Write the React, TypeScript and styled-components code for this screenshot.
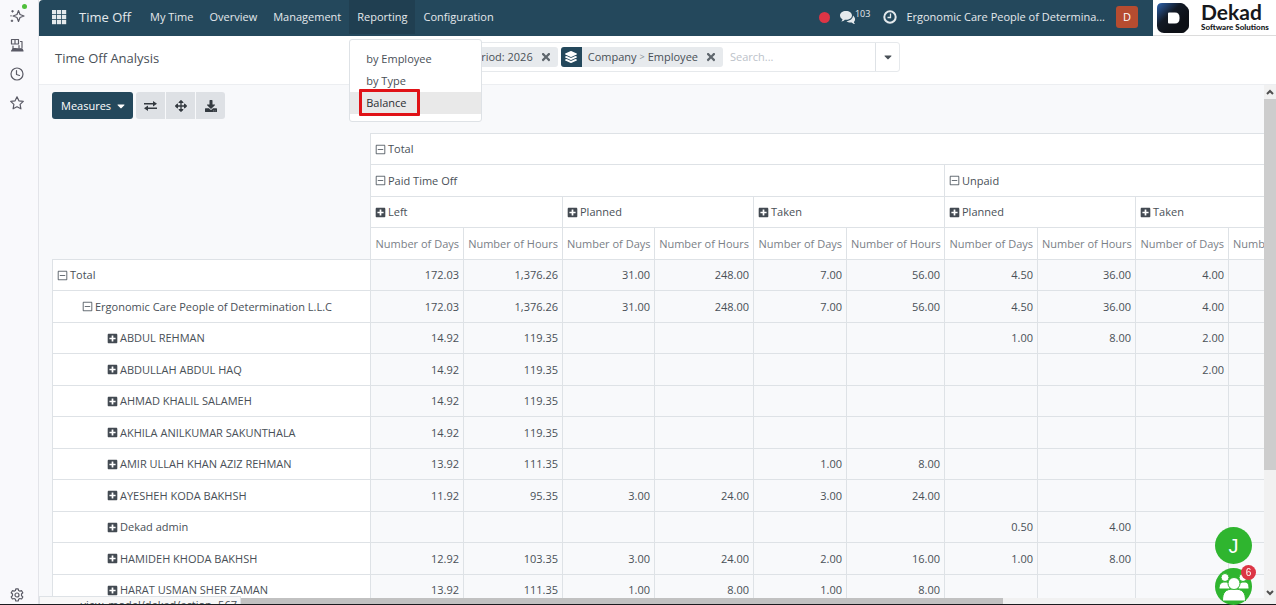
import React from "react";
import styled, { createGlobalStyle, css } from "styled-components";
import {
  FaPlusSquare,
  FaRegMinusSquare,
  FaCaretDown,
  FaDownload,
  FaArrowsAlt,
  FaLayerGroup,
  FaTimes,
} from "react-icons/fa";

const Global = createGlobalStyle`
  *, *::before, *::after { box-sizing: border-box; }
  body {
    margin: 0;
    overflow: hidden;
    background: #f8f9fb;
    color: #495057;
    font-family: "Open Sans", "Noto Sans", sans-serif;
    font-size: 11px;
    line-height: 18px;
  }
  button, input { font: inherit; color: inherit; }
  a { color: inherit; text-decoration: none; }
`;

const navy = "#24485c";
const line = "#dee2e6";

const Shell = styled.div`
  display: flex;
  height: 100vh;
  overflow: hidden;
  border-bottom: 1px solid #1b1b1f;
`;

const Rail = styled.aside`
  flex: none;
  width: 39px;
  display: flex;
  flex-direction: column;
  align-items: center;
  justify-content: space-between;
  padding: 8px 4px 1px 0;
  background: #f9f9fc;
  border-right: 1px solid #e3e4e9;
`;

const RailGroup = styled.div`
  display: flex;
  flex-direction: column;
  gap: 13px;
`;

const RailButton = styled.button`
  position: relative;
  display: flex;
  padding: 0;
  border: 0;
  background: none;
  color: #5b5b66;
`;

const Dot = styled.span`
  position: absolute;
  top: -4px;
  right: -2px;
  width: 5px;
  height: 5px;
  border-radius: 50%;
  background: #4fbf3b;
`;

const Main = styled.div`
  flex: 1;
  min-width: 0;
  display: flex;
  flex-direction: column;
`;

const TopRow = styled.header`
  flex: none;
  display: flex;
  height: 36px;
  background: #fff;
`;

const NavBar = styled.nav`
  flex: 1;
  min-width: 0;
  display: flex;
  align-items: center;
  padding: 0 15px 2px 13px;
  background: ${navy};
  color: #e4e9ec;
  border-top-left-radius: 4px;
`;

const AppsButton = styled.button`
  display: flex;
  margin-right: 12px;
  padding: 0;
  border: 0;
  background: none;
`;

const Brand = styled.a`
  margin-right: 11px;
  font-size: 13px;
`;

const NavItem = styled.div`
  position: relative;
`;

const NavLink = styled.a<{ $active?: boolean }>`
  display: block;
  height: 34px;
  padding: 0 8px;
  border: 0;
  line-height: 34px;
  white-space: nowrap;
  background: ${(p) => (p.$active ? "#203f51" : "transparent")};
`;

const Tray = styled.div`
  margin-left: auto;
  display: flex;
  align-items: center;
`;

const RecordDot = styled.span`
  width: 11px;
  height: 11px;
  margin-right: 10px;
  border-radius: 50%;
  background: #dc3545;
`;

const TrayButton = styled.button`
  display: flex;
  align-items: center;
  padding: 0;
  border: 0;
  background: none;
`;

const Count = styled.span`
  margin: 0 13px 6px 0;
  font-size: 9px;
  line-height: 12px;
`;

const Company = styled.span`
  margin: 0 11px 0 9px;
`;

const Avatar = styled.span`
  display: grid;
  place-items: center;
  width: 22px;
  height: 22px;
  border-radius: 3px;
  background: #b64c30;
  color: #fff;
`;

const LogoBox = styled.a`
  flex: none;
  display: flex;
  align-items: center;
  gap: 12px;
  width: 123px;
  padding-left: 4px;
  border-bottom: 1px solid #dcdcdc;
  background: #fff;
  color: #16181c;
  font-family: Lato, sans-serif;
`;

const LogoName = styled.span`
  display: block;
  font-size: 21px;
  line-height: 20px;
  font-weight: 700;
`;

const LogoTag = styled.span`
  display: block;
  font-size: 8px;
  line-height: 11px;
  font-weight: 900;
  white-space: nowrap;
`;

const ControlPanel = styled.div`
  flex: none;
  display: flex;
  height: 49px;
  padding: 6px 0 0 16px;
  background: #fff;
  border-bottom: 1px solid #eceef1;
`;

const Title = styled.h1`
  flex: 0 0 321px;
  margin: 0;
  padding-top: 6px;
  font-size: 13px;
  font-weight: 400;
  line-height: 20px;
`;

const SearchBar = styled.form`
  flex: 0 0 524px;
  display: flex;
  height: 30px;
  border: 1px solid #e6e9ec;
  border-radius: 3px;
  overflow: hidden;
`;

const Facets = styled.div`
  flex: 0 0 346px;
  display: flex;
  justify-content: flex-end;
  gap: 3px;
  padding: 4px 0;
`;

const Facet = styled.span`
  display: flex;
  align-items: center;
  height: 20px;
  padding-right: 6px;
  border-radius: 3px;
  overflow: hidden;
  background: #e7eaed;
  white-space: nowrap;
`;

const FacetIcon = styled.span`
  display: grid;
  place-items: center;
  width: 21px;
  height: 20px;
  margin-right: 6px;
  background: ${navy};
  color: #fff;
`;

const FacetSep = styled.i`
  margin: 0 3px;
  font-style: normal;
  font-size: 9px;
  color: #868c93;
`;

const FacetClose = styled.button`
  display: flex;
  margin-left: 7px;
  padding: 0;
  border: 0;
  background: none;
  color: #5f666d;
`;

const SearchInput = styled.input`
  flex: 1;
  min-width: 0;
  padding: 0 7px;
  border: 0;
  outline: 0;
  background: none;
  &::placeholder { color: #bcc2c9; opacity: 1; }
`;

const SearchToggle = styled.button`
  flex: 0 0 24px;
  display: grid;
  place-items: center;
  padding: 0;
  border: 0;
  border-left: 1px solid ${line};
  background: none;
`;

const Menu = styled.ul`
  position: absolute;
  z-index: 5;
  top: 39px;
  left: 0;
  width: 133px;
  margin: 0;
  padding: 8px 0 7px;
  list-style: none;
  border: 1px solid ${line};
  border-radius: 3px;
  background: #fff;
  color: #495057;
`;

const MenuItem = styled.li<{ $hover?: boolean }>`
  line-height: 22px;
  background: ${(p) => (p.$hover ? "#e9e9e9" : "transparent")};
  color: ${(p) => (p.$hover ? "#2b2f33" : "inherit")};
  a { display: block; padding-left: 16px; }
`;

const Highlight = styled.span`
  position: absolute;
  left: 9px;
  bottom: 5px;
  width: 61px;
  height: 27px;
  border: 3px solid #e01217;
  border-radius: 1px;
`;

const Body = styled.div`
  flex: 1;
  min-height: 0;
  display: flex;
`;

const Content = styled.main`
  flex: 1;
  min-width: 0;
  display: flex;
  flex-direction: column;
  overflow: hidden;
`;

const Buttons = styled.div`
  flex: none;
  display: flex;
  gap: 3px;
  height: 48px;
  padding: 7px 0 0 13px;
`;

const Measures = styled.button`
  display: flex;
  align-items: center;
  gap: 4px;
  height: 27px;
  padding: 0 6px 0 9px;
  border: 0;
  border-radius: 3px;
  background: ${navy};
  color: #fff;
`;

const ToolGroup = styled.div`
  display: flex;
  gap: 1px;
  height: 27px;
  border-radius: 3px;
  overflow: hidden;
`;

const Tool = styled.button`
  display: grid;
  place-items: center;
  width: 29px;
  padding: 0;
  border: 0;
  background: #dee1e5;
  color: #343a40;
`;

const TableArea = styled.div`
  flex: 1;
  min-height: 0;
  padding-left: 13px;
  overflow: hidden;
`;

const Pivot = styled.table`
  width: 1274px;
  table-layout: fixed;
  border-collapse: collapse;
  tr:nth-child(odd) { height: 31px; }
  tr:nth-child(even) { height: 32px; }
`;

const cell = css`
  padding: 0 4px;
  border: 1px solid ${line};
  font-weight: 400;
  white-space: nowrap;
`;

const Corner = styled.td`
  padding: 0;
`;

const Head = styled.th`
  ${cell}
  background: #fff;
  text-align: left;
`;

const Measure = styled.th`
  ${cell}
  background: #fff;
  color: #7a8087;
  text-align: right;
`;

const RowHead = styled.th<{ $level: number }>`
  ${cell}
  padding-left: ${(p) => 4 + p.$level * 25}px;
  background: #fff;
  text-align: left;
`;

const Value = styled.td`
  ${cell}
  text-align: right;
`;

const Toggle = styled.button`
  display: flex;
  align-items: center;
  gap: 2px;
  padding: 0;
  border: 0;
  background: none;
  svg { flex: none; }
`;

const HScroll = styled.div`
  flex: none;
  display: flex;
  height: 6px;
  background: #f1f1f1;
`;

const HThumb = styled.span`
  width: 964px;
  background: #c1c1c1;
`;

const VScroll = styled.div`
  flex: 0 0 12px;
  display: flex;
  flex-direction: column;
  align-items: center;
  justify-content: space-between;
  padding-bottom: 4px;
  background: #f1f1f1;
  color: #505050;
`;

const VThumb = styled.span`
  width: 12px;
  flex: 0 1 371px;
  margin-bottom: auto;
  background: #cdcdcd;
`;

const ArrowBox = styled.span`
  flex: 0 0 14px;
  display: grid;
  place-items: center;
`;

const StatusBubble = styled.div`
  position: fixed;
  left: 39px;
  bottom: 1px;
  width: 202px;
  height: 8px;
  overflow: hidden;
  border: 1px solid ${line};
  border-bottom: 0;
  background: #f8f8f8;
  padding-right: 3px;
  text-align: right;
  line-height: 16px;
`;

const Floating = styled.div`
  position: fixed;
  right: 24px;
  bottom: 0;
  display: flex;
  flex-direction: column;
  gap: 4px;
`;

const Bubble = styled.button`
  position: relative;
  display: grid;
  place-items: center;
  width: 37px;
  height: 37px;
  padding: 0;
  border: 0;
  border-radius: 50%;
  background: #2fb52f;
  color: #fff;
  font-family: "Liberation Sans", sans-serif;
  font-size: 20px;
`;

const Badge = styled.span`
  position: absolute;
  top: -3px;
  right: -4px;
  width: 15px;
  height: 15px;
  border-radius: 50%;
  background: #dc3545;
  font-size: 10px;
  line-height: 15px;
  text-align: center;
`;

const Stroke = ({ size = 16, children }: { size?: number; children: React.ReactNode }) => (
  <svg width={size} height={size} viewBox="0 0 16 16" fill="none" stroke="currentColor" strokeWidth="1.2" strokeLinejoin="round" strokeLinecap="round">
    {children}
  </svg>
);

const Plus = () => <FaPlusSquare size={11} color="#434a52" />;
const Minus = () => <FaRegMinusSquare size={11} color="#6a7178" />;

const measureWidths = [93, 99, 92, 99, 93, 98, 93, 98, 93, 98];

type Row = { name: string; level: number; open?: boolean; values: string[] };

const rows: Row[] = [
  { name: "Total", level: 0, open: true, values: ["172.03", "1,376.26", "31.00", "248.00", "7.00", "56.00", "4.50", "36.00", "4.00", ""] },
  { name: "Ergonomic Care People of Determination L.L.C", level: 1, open: true, values: ["172.03", "1,376.26", "31.00", "248.00", "7.00", "56.00", "4.50", "36.00", "4.00", ""] },
  { name: "ABDUL REHMAN", level: 2, values: ["14.92", "119.35", "", "", "", "", "1.00", "8.00", "2.00", ""] },
  { name: "ABDULLAH ABDUL HAQ", level: 2, values: ["14.92", "119.35", "", "", "", "", "", "", "2.00", ""] },
  { name: "AHMAD KHALIL SALAMEH", level: 2, values: ["14.92", "119.35", "", "", "", "", "", "", "", ""] },
  { name: "AKHILA ANILKUMAR SAKUNTHALA", level: 2, values: ["14.92", "119.35", "", "", "", "", "", "", "", ""] },
  { name: "AMIR ULLAH KHAN AZIZ REHMAN", level: 2, values: ["13.92", "111.35", "", "", "1.00", "8.00", "", "", "", ""] },
  { name: "AYESHEH KODA BAKHSH", level: 2, values: ["11.92", "95.35", "3.00", "24.00", "3.00", "24.00", "", "", "", ""] },
  { name: "Dekad admin", level: 2, values: ["", "", "", "", "", "", "0.50", "4.00", "", ""] },
  { name: "HAMIDEH KHODA BAKHSH", level: 2, values: ["12.92", "103.35", "3.00", "24.00", "2.00", "16.00", "1.00", "8.00", "", ""] },
  { name: "HARAT USMAN SHER ZAMAN", level: 2, values: ["13.92", "111.35", "1.00", "8.00", "1.00", "8.00", "", "", "", ""] },
];

const Sidebar = () => (
  <Rail>
    <RailGroup>
      <RailButton aria-label="Assistant">
        <Stroke>
          <path d="M9.500 2.500 11 6.500 15 8 11 9.500 9.500 13.500 8 9.500 4 8 8 6.500Z" />
          <path d="M3.500 2.500v1.500M2.800 3.200h1.500M3 12v1.500M2.200 12.800h1.500M2 7.500v.500" />
        </Stroke>
        <Dot />
      </RailButton>
      <RailButton aria-label="Devices">
        <Stroke>
          <path d="M2.500 2.500h7v4.500h-7zM6 2.500v4.500M11.500 4.500h1.500v6M4 9v2.500h3M10 8.500v2.500" />
          <path d="M2.500 14h11.500l-1-2.200H4z" fill="currentColor" />
        </Stroke>
      </RailButton>
      <RailButton aria-label="History">
        <Stroke>
          <circle cx="8" cy="8" r="6" />
          <path d="M7.500 4.500V8.500L10.500 9.500" />
        </Stroke>
      </RailButton>
      <RailButton aria-label="Bookmarks">
        <Stroke>
          <path d="m8 1.800 1.900 4 4.400.6-3.200 3 .8 4.400L8 11.700l-3.900 2.100.8-4.400-3.200-3 4.400-.6z" />
        </Stroke>
      </RailButton>
    </RailGroup>
    <RailButton aria-label="Customize">
      <Stroke>
        <circle cx="8" cy="8" r="2" />
        <path d="M6.800 1.800h2.400l.4 1.700 1.300.7 1.700-.5 1.200 2.100-1.300 1.200v1.700l1.300 1.300-1.200 2-1.700-.5-1.300.8-.4 1.700H6.800l-.4-1.700-1.300-.8-1.700.5-1.200-2 1.300-1.300V7L2.200 5.800l1.200-2.100 1.700.5 1.300-.7z" />
      </Stroke>
    </RailButton>
  </Rail>
);

const ReportingMenu = () => (
  <Menu>
    <MenuItem><a href="#employee">by Employee</a></MenuItem>
    <MenuItem><a href="#type">by Type</a></MenuItem>
    <MenuItem $hover><a href="#balance">Balance</a></MenuItem>
    <Highlight />
  </Menu>
);

const Header = () => (
  <TopRow>
    <NavBar>
      <AppsButton aria-label="Apps">
        <svg width="15" height="15" viewBox="0 0 15 15" fill="#e4e9ec">
          {[0, 5, 10].map((y) => [0, 5, 10].map((x) => <rect key={`${x}-${y}`} x={x} y={y} width="4.200" height="4.200" />))}
        </svg>
      </AppsButton>
      <Brand href="#home">Time Off</Brand>
      <NavLink href="#my-time">My Time</NavLink>
      <NavLink href="#overview">Overview</NavLink>
      <NavLink href="#management">Management</NavLink>
      <NavItem>
        <NavLink as="button" $active>Reporting</NavLink>
        <ReportingMenu />
      </NavItem>
      <NavLink href="#configuration">Configuration</NavLink>
      <Tray>
        <RecordDot />
        <TrayButton aria-label="Messages">
          <svg width="15" height="14" viewBox="0 0 30 28" fill="#e4e9ec">
            <path d="M12 2C5 2 0 6 0 11c0 3 2 6 5 7.500-.3 1.500-1 3-2.500 4.500 3 0 5.500-1.500 7-3.500.8.200 1.600.2 2.500.2 7 0 12-4 12-8.700S19 2 12 2z" />
            <path d="M26 11c0 6-6 11-13 11 2 2 5 3 8 3 1 0 1.500 0 2.300-.2C25 26.500 27 28 30 28c-1.500-1.500-2-2.800-2.200-4.200C32 20 30 14 26 11z" />
          </svg>
          <Count>103</Count>
        </TrayButton>
        <TrayButton aria-label="Activities">
          <svg width="14" height="14" viewBox="0 0 14 14" fill="none" stroke="#e4e9ec">
            <circle cx="7" cy="7" r="5.700" strokeWidth="2" />
            <path d="M7.500 3.500v4H4.500" strokeWidth="1.300" />
          </svg>
        </TrayButton>
        <Company>Ergonomic Care People of Determina...</Company>
        <Avatar>D</Avatar>
      </Tray>
    </NavBar>
    <LogoBox href="#dekad">
      <svg width="32" height="30" viewBox="0 0 32 30">
        <defs>
          <linearGradient id="mark" x1="0" y1="0" x2="0.7" y2="0.7">
            <stop offset="0" stopColor="#2c62ad" />
            <stop offset="0.55" stopColor="#131a26" />
            <stop offset="1" stopColor="#0d1016" />
          </linearGradient>
        </defs>
        <path d="M5 0h19q2 0 3.500 1.500l3 3Q32 6 32 8v15q0 2-1.500 3.500l-2 2Q27 30 25 30H7q-3 0-5-2t-2-5V5q0-5 5-5z" fill="url(#mark)" />
        <path d="M12 9.500h6q4.500 0 4.500 5v1q0 5-4.500 5h-6q-1 0-1-1v-9q0-1 1-1z" fill="#fff" />
      </svg>
      <span>
        <LogoName>Dekad</LogoName>
        <LogoTag>Software Solutions</LogoTag>
      </span>
    </LogoBox>
  </TopRow>
);

const Search = () => (
  <SearchBar>
    <Facets>
      <Facet>
        Time Off Period: 2026
        <FacetClose type="button" aria-label="Remove period filter"><FaTimes size={12} /></FacetClose>
      </Facet>
      <Facet>
        <FacetIcon><FaLayerGroup size={12} /></FacetIcon>
        Company<FacetSep>&gt;</FacetSep>Employee
        <FacetClose type="button" aria-label="Remove grouping"><FaTimes size={12} /></FacetClose>
      </Facet>
    </Facets>
    <SearchInput aria-label="Search" placeholder="Search..." />
    <SearchToggle type="button" aria-label="Search options"><FaCaretDown size={12} /></SearchToggle>
  </SearchBar>
);

const PivotTable = () => (
  <Pivot>
    <colgroup>
      <col style={{ width: 318 }} />
      {measureWidths.map((w, i) => <col key={i} style={{ width: w }} />)}
    </colgroup>
    <thead>
      <tr>
        <Corner rowSpan={4} />
        <Head colSpan={10}><Toggle><Minus />Total</Toggle></Head>
      </tr>
      <tr>
        <Head colSpan={6}><Toggle><Minus />Paid Time Off</Toggle></Head>
        <Head colSpan={4}><Toggle><Minus />Unpaid</Toggle></Head>
      </tr>
      <tr>
        {["Left", "Planned", "Taken", "Planned", "Taken"].map((label, i) => (
          <Head key={i} colSpan={2}><Toggle><Plus />{label}</Toggle></Head>
        ))}
      </tr>
      <tr>
        {measureWidths.map((_, i) => (
          <Measure key={i}>{i % 2 ? "Number of Hours" : "Number of Days"}</Measure>
        ))}
      </tr>
    </thead>
    <tbody>
      {rows.map((row) => (
        <tr key={row.name}>
          <RowHead $level={row.level}>
            <Toggle>{row.open ? <Minus /> : <Plus />}{row.name}</Toggle>
          </RowHead>
          {row.values.map((v, i) => <Value key={i}>{v}</Value>)}
        </tr>
      ))}
    </tbody>
  </Pivot>
);

const Chevron = ({ up }: { up?: boolean }) => (
  <svg width="8" height="6" viewBox="0 0 8 6" fill="none" stroke="currentColor" strokeWidth="2">
    <path d={up ? "M1 5l3-3 3 3" : "M1 1l3 3 3-3"} />
  </svg>
);

export default function App() {
  return (
    <>
      <Global />
      <Shell>
        <Sidebar />
        <Main>
          <Header />
          <ControlPanel>
            <Title>Time Off Analysis</Title>
            <Search />
          </ControlPanel>
          <Body>
            <Content>
              <Buttons>
                <Measures>Measures <FaCaretDown size={12} /></Measures>
                <ToolGroup>
                  <Tool aria-label="Flip axis">
                    <svg width="13" height="10" viewBox="0 0 13 10" fill="currentColor">
                      <path d="M0 2h9V0l4 2.800L9 5.500V3.500H0zM13 6.500H4v-2L0 7.300 4 10V8h9z" />
                    </svg>
                  </Tool>
                  <Tool aria-label="Expand all"><FaArrowsAlt size={12} /></Tool>
                  <Tool aria-label="Download"><FaDownload size={12} /></Tool>
                </ToolGroup>
              </Buttons>
              <TableArea><PivotTable /></TableArea>
              <HScroll><HThumb /></HScroll>
            </Content>
            <VScroll>
              <ArrowBox><Chevron up /></ArrowBox>
              <VThumb />
              <ArrowBox><Chevron /></ArrowBox>
            </VScroll>
          </Body>
        </Main>
      </Shell>
      <StatusBubble>view_model/dekad/action=567</StatusBubble>
      <Floating>
        <Bubble aria-label="Chat with J">J</Bubble>
        <Bubble aria-label="Group chat">
          <svg width="32" height="28" viewBox="0 0 32 28" fill="#fff" stroke="#2fb52f">
            <circle cx="7" cy="4.500" r="4" />
            <circle cx="25" cy="4.500" r="4" />
            <path d="M1 16c0-5 2-7 6-7s5 2 5 7zM20 16c0-5 2-7 6-7s5 2 5 7z" />
            <path d="M4.500 28c0-9 3-12 11.500-12s11.500 3 11.500 12z" />
            <circle cx="16" cy="10.500" r="6" />
          </svg>
          <Badge>6</Badge>
        </Bubble>
      </Floating>
    </>
  );
}
